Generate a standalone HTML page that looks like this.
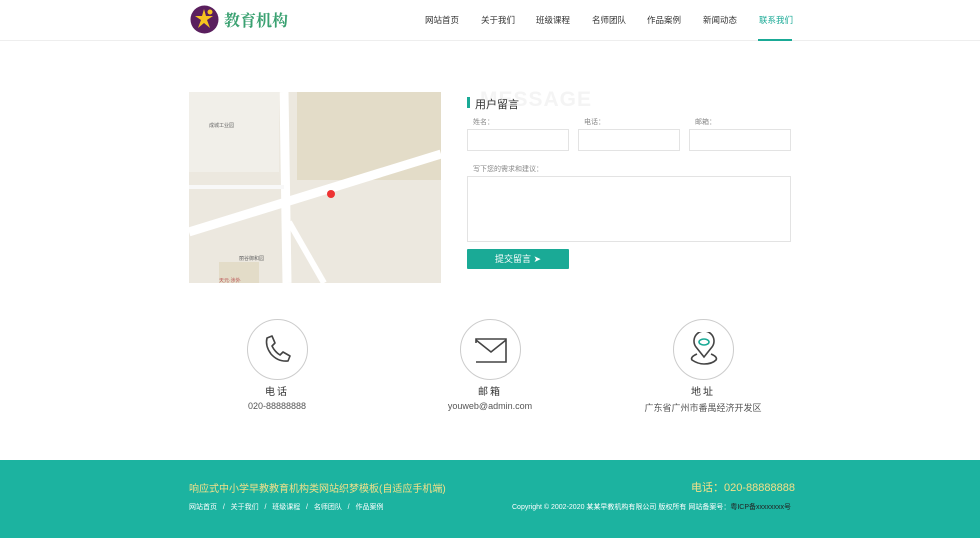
<!DOCTYPE html>
<html><head><meta charset="utf-8"><style>
*{margin:0;padding:0;box-sizing:border-box}
body{width:980px;height:538px;background:#fff;font-family:"Liberation Sans","Noto Sans CJK SC",sans-serif;position:relative;overflow:hidden;color:#333}
.a{position:absolute}
.nav span{position:absolute;top:14px;font-size:8.5px;color:#333}
.lbl{font-size:7px;color:#888}
.inp{border:1px solid #e3e3e3;background:#fff}
.ic{width:61px;height:61px;border:1px solid #ccc;border-radius:50%}
.t1{font-size:10px;color:#333;text-align:center;width:200px;letter-spacing:2px}
.t2{font-size:9px;color:#555;text-align:center;width:200px}
</style></head><body>
<div class="a" style="left:0;top:40px;width:980px;height:1px;background:#eee"></div>
<svg class="a" style="left:190px;top:5px" width="29" height="29" viewBox="0 0 29 29"><circle cx="14.5" cy="14.5" r="14" fill="#5a1f5e"/><path d="M14 4 L16 11 L23 11 L17 15 L20 23 L14 18 L8 23 L11 15 L5 11 L12 11Z" fill="#f5c41f"/><circle cx="20" cy="7" r="2.5" fill="#f5c41f"/></svg>
<div class="a" style="left:224px;top:8px;font-size:16px;font-weight:bold;color:#3aa171;font-family:'Noto Serif CJK SC',serif">教育机构</div>
<div class="nav">
<span style="left:425px">网站首页</span><span style="left:481px">关于我们</span><span style="left:536px">班级课程</span><span style="left:592px">名师团队</span><span style="left:647px">作品案例</span><span style="left:703px">新闻动态</span><span style="left:759px;color:#1aaa96">联系我们</span>
</div>
<div class="a" style="left:758px;top:39px;width:34px;height:2px;background:#1aaa96"></div>

<svg class="a" style="left:189px;top:92px" width="252" height="191" viewBox="0 0 252 191">
<rect width="252" height="191" fill="#ece8df"/>
<rect x="108" y="0" width="144" height="88" fill="#e3dcc8"/>
<rect x="0" y="0" width="90" height="80" fill="#f1efe9"/>
<path d="M95 0 L98 191" stroke="#fff" stroke-width="9"/>
<path d="M0 140 L252 62" stroke="#fff" stroke-width="9"/>
<path d="M100 130 L135 191" stroke="#fff" stroke-width="6"/>
<path d="M0 95 L95 95" stroke="#f8f8f8" stroke-width="4"/>
<rect x="30" y="170" width="40" height="21" fill="#e3dcc8"/>
<circle cx="142" cy="102" r="4" fill="#e33"/>
<text x="20" y="35" font-size="5" fill="#666">成城工业园</text>
<text x="30" y="190" font-size="5" fill="#b55">天元·涉外</text>
<text x="50" y="168" font-size="5" fill="#666">丽谷御和园</text>
</svg>

<div class="a" style="left:467px;top:97px;width:3px;height:11px;background:#1aaa96"></div>
<div class="a" style="left:480px;top:88px;font-size:21px;font-weight:bold;color:#f4f4f4;letter-spacing:1px">MESSAGE</div>
<div class="a" style="left:475px;top:96px;font-size:11px;color:#333">用户留言</div>
<div class="a lbl" style="left:473px;top:117px">姓名：</div>
<div class="a lbl" style="left:584px;top:117px">电话：</div>
<div class="a lbl" style="left:695px;top:117px">邮箱：</div>
<div class="a inp" style="left:467px;top:129px;width:102px;height:22px"></div>
<div class="a inp" style="left:578px;top:129px;width:102px;height:22px"></div>
<div class="a inp" style="left:689px;top:129px;width:102px;height:22px"></div>
<div class="a lbl" style="left:473px;top:164px">写下您的需求和建议：</div>
<div class="a inp" style="left:467px;top:176px;width:324px;height:66px"></div>
<div class="a" style="left:467px;top:249px;width:102px;height:20px;background:#1aaa96;border-radius:1px;color:#fff;font-size:9px;text-align:center;line-height:20px">提交留言 ➤</div>

<div class="a ic" style="left:247px;top:319px"></div>
<svg class="a" style="left:262px;top:334px" width="30" height="30" viewBox="0 0 30 30"><path d="M5 4 L10 2 L13 9 L10 12 Q13 18 18 21 L21 18 L28 22 L26 27 Q16 28 9 20 Q3 12 5 4Z" fill="none" stroke="#444" stroke-width="1.6" stroke-linejoin="round"/></svg>
<div class="a ic" style="left:460px;top:319px"></div>
<svg class="a" style="left:474px;top:337px" width="34" height="26" viewBox="0 0 34 26"><path d="M2 25 L32 25 L32 2 L2 2 L2 6 M2 3 L17 15 L32 3" fill="none" stroke="#444" stroke-width="1.6"/></svg>
<div class="a ic" style="left:673px;top:319px"></div>
<svg class="a" style="left:688px;top:332px" width="32" height="34" viewBox="0 0 32 34"><path d="M16 25 L8 15 A10 10 0 1 1 24 15 Z" fill="none" stroke="#444" stroke-width="1.6"/><ellipse cx="16" cy="10" rx="5" ry="3" fill="none" stroke="#1aaa96" stroke-width="1.6"/><path d="M9 22 Q2 25 4 28 Q10 32 16 32 Q24 32 28 28 Q30 25 23 22" fill="none" stroke="#444" stroke-width="1.6"/></svg>
<div class="a t1" style="left:177px;top:383px">电话</div>
<div class="a t2" style="left:177px;top:401px">020-88888888</div>
<div class="a t1" style="left:390px;top:383px">邮箱</div>
<div class="a t2" style="left:390px;top:401px">youweb@admin.com</div>
<div class="a t1" style="left:603px;top:383px">地址</div>
<div class="a t2" style="left:603px;top:401px">广东省广州市番禺经济开发区</div>

<div class="a" style="left:0;top:460px;width:980px;height:78px;background:#1cb3a0"></div>
<div class="a" style="left:189px;top:480px;font-size:10px;color:#f2e08a">响应式中小学早教教育机构类网站织梦模板(自适应手机端)</div>
<div class="a" style="left:691px;top:479px;width:100px;text-align:right;font-size:11px;color:#f2e08a;white-space:nowrap">电话：020-88888888</div>
<div class="a" style="left:189px;top:502px;font-size:7px;color:#fff;white-space:nowrap">网站首页 &nbsp; / &nbsp; 关于我们 &nbsp; / &nbsp; 班级课程 &nbsp; / &nbsp; 名师团队 &nbsp; / &nbsp; 作品案例</div>
<div class="a" style="left:497px;top:502px;width:294px;text-align:right;font-size:7px;color:#fff;white-space:nowrap">Copyright © 2002-2020 某某早教机构有限公司 版权所有 网站备案号：<span style="color:#222">粤ICP备xxxxxxxx号</span></div>
</body></html>
